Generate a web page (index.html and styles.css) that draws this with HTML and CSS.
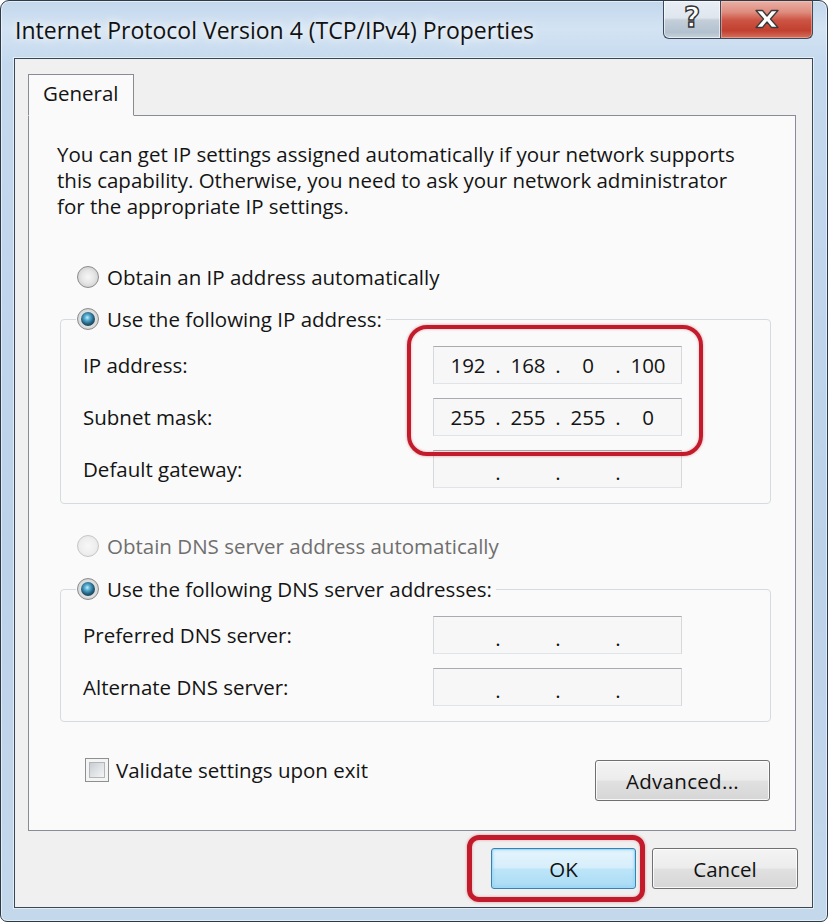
FILE: index.html
```html
<!DOCTYPE html>
<html lang="en">
<head>
<meta charset="utf-8">
<title>Internet Protocol Version 4 (TCP/IPv4) Properties</title>
<link rel="stylesheet" href="styles.css">
</head>
<body>
<div class="window">
  <div class="titlebar">
    <div class="title">Internet Protocol Version 4 (TCP/IPv4) Properties</div>
    <div class="caption-buttons">
      <div class="cap-btn help"><span class="help-glyph">?</span></div>
      <div class="cap-btn close">
        <svg class="close-glyph" width="26" height="20" viewBox="0 0 26 20"><polygon points="2,1.5 8.5,1.5 13,7 17.5,1.5 24,1.5 16.5,10 24,18.5 17.5,18.5 13,13 8.5,18.5 2,18.5 9.5,10" fill="#ffffff" stroke="#3b3b3b" stroke-width="1.3" stroke-linejoin="round"/></svg>
      </div>
    </div>
  </div>
  <div class="client">
    <div class="tabs"><div class="tab">General</div></div>
    <div class="panel">
      <p class="intro">You can get IP settings assigned automatically if your network supports<br>this capability. Otherwise, you need to ask your network administrator<br>for the appropriate IP settings.</p>

      <div class="option first-option"><span class="radio"></span><span>Obtain an IP address automatically</span></div>

      <fieldset class="group ip-group">
        <legend class="option"><span class="radio checked"></span><span>Use the following IP address:</span></legend>
        <div class="hl-wrap">
          <div class="row"><span class="label">IP address:</span>
            <div class="ipfield"><span class="seg">192</span><span class="dot">.</span><span class="seg">168</span><span class="dot">.</span><span class="seg">0</span><span class="dot">.</span><span class="seg">100</span></div>
          </div>
          <div class="row"><span class="label">Subnet mask:</span>
            <div class="ipfield"><span class="seg">255</span><span class="dot">.</span><span class="seg">255</span><span class="dot">.</span><span class="seg">255</span><span class="dot">.</span><span class="seg">0</span></div>
          </div>
          <div class="highlight hl-ip"></div>
        </div>
        <div class="row"><span class="label">Default gateway:</span>
          <div class="ipfield empty"><span class="seg"></span><span class="dot">.</span><span class="seg"></span><span class="dot">.</span><span class="seg"></span><span class="dot">.</span><span class="seg"></span></div>
        </div>
      </fieldset>

      <div class="option dns-auto disabled"><span class="radio disabled"></span><span>Obtain DNS server address automatically</span></div>

      <fieldset class="group dns-group">
        <legend class="option"><span class="radio checked"></span><span>Use the following DNS server addresses:</span></legend>
        <div class="row"><span class="label">Preferred DNS server:</span>
          <div class="ipfield empty"><span class="seg"></span><span class="dot">.</span><span class="seg"></span><span class="dot">.</span><span class="seg"></span><span class="dot">.</span><span class="seg"></span></div>
        </div>
        <div class="row"><span class="label">Alternate DNS server:</span>
          <div class="ipfield empty"><span class="seg"></span><span class="dot">.</span><span class="seg"></span><span class="dot">.</span><span class="seg"></span><span class="dot">.</span><span class="seg"></span></div>
        </div>
      </fieldset>

      <div class="bottom-row">
        <div class="check"><span class="checkbox"></span><span>Validate settings upon exit</span></div>
        <div class="btn advanced">Advanced...</div>
      </div>
    </div>
    <div class="footer">
      <div class="ok-wrap">
        <div class="btn ok">OK</div>
        <div class="highlight hl-ok"></div>
      </div>
      <div class="btn cancel">Cancel</div>
    </div>
  </div>
</div>
</body>
</html>
```

FILE: styles.css
```css
* { box-sizing: border-box; }
html, body { margin: 0; padding: 0; }
body {
  width: 828px;
  height: 922px;
  overflow: hidden;
  background: #ffffff;
  font-family: "Open Sans", "Noto Sans", sans-serif;
  font-size: 20.5px;
  color: #141414;
  white-space: nowrap;
}

.window {
  width: 828px;
  height: 922px;
  border: 1px solid #2d3a48;
  border-radius: 9px 9px 7px 7px;
  background: linear-gradient(180deg, #c3d7ec 0%, #d3e3f3 3%, #c4d9ee 7%, #bcd2e9 60%, #c4d8ec 100%);
  box-shadow: inset 0 0 0 1px rgba(255,255,255,0.55);
  display: flex;
  flex-direction: column;
}

.titlebar {
  height: 57px;
  flex: none;
  display: flex;
  justify-content: space-between;
  align-items: flex-start;
}
.title {
  margin: 14px 0 0 14px;
  font-size: 23px;
  line-height: 30px;
  color: #111;
  text-shadow: 0 0 8px rgba(255,255,255,0.95), 0 0 14px rgba(255,255,255,0.8);
}
.caption-buttons {
  display: flex;
  margin-right: 14px;
}
.cap-btn {
  height: 38px;
  display: flex;
  align-items: center;
  justify-content: center;
  border: 1px solid #3c4a5a;
  border-top: none;
}
.help {
  width: 57px;
  border-right: none;
  border-radius: 0 0 0 6px;
  background: linear-gradient(180deg, #e9eef4 0%, #dfe6ee 45%, #c3ced9 52%, #b3c1cf 85%, #c7d3de 100%);
  box-shadow: inset 0 0 0 1px rgba(255,255,255,0.6);
}
.help-glyph {
  font-family: "DejaVu Sans", sans-serif;
  font-weight: bold;
  font-size: 28px;
  line-height: 1;
  color: #ffffff;
  -webkit-text-stroke: 1.4px #333;
  margin-top: -3px;
}
.close {
  width: 93px;
  border-radius: 0 0 6px 0;
  background: linear-gradient(180deg, #e9b0a5 0%, #de8c7e 30%, #cc5444 52%, #c2402f 80%, #d4705f 100%);
  box-shadow: inset 0 0 0 1px rgba(255,210,200,0.45);
}
.close-glyph { margin-top: -1px; }

.client {
  flex: 1;
  margin: 0 14px 13px 13px;
  border: 1px solid #3a4856;
  background: #f0f0f0;
  box-shadow: 0 0 0 1px rgba(255,255,255,0.55);
  display: flex;
  flex-direction: column;
}

.tabs {
  padding: 15px 0 0 13px;
  display: flex;
}
.tab {
  position: relative;
  z-index: 1;
  width: 106px;
  height: 42px;
  margin-bottom: -1px;
  padding-left: 14px;
  border: 1px solid #898c95;
  border-bottom-color: #fafafa;
  background: #fafafa;
  line-height: 37px;
}

.panel {
  height: 716px;
  margin: 0 16px 0 13px;
  border: 1px solid #898c95;
  background: #fafafa;
  display: flex;
  flex-direction: column;
  align-items: flex-start;
}

.intro {
  margin: 25px 0 0 28px;
  line-height: 26px;
}

.option {
  display: flex;
  align-items: center;
  gap: 8px;
  height: 26px;
}
.first-option { margin: 45px 0 0 48px; }
.dns-auto { margin: 29px 0 0 48px; color: #6f6f6f; }

.radio {
  flex: none;
  position: relative;
  width: 22px;
  height: 22px;
  border-radius: 50%;
  border: 1px solid #8c8c8c;
  background: radial-gradient(circle at 50% 50%, #f6f6f6 0%, #e6e6e6 45%, #cfcfcf 80%, #c2c2c2 100%);
}
.radio.checked::after {
  content: "";
  position: absolute;
  inset: 3px;
  border-radius: 50%;
  background: radial-gradient(circle at 45% 40%, #c9ecfb 0%, #5cb3d6 22%, #24607f 55%, #123449 85%, #0d2636 100%);
}
.radio.disabled {
  border-color: #c6c6c6;
  background: radial-gradient(circle at 50% 50%, #f7f7f7 0%, #efefef 50%, #e2e2e2 100%);
}

.group {
  align-self: stretch;
  min-width: 0;
  margin: 16px 24px 0 31px;
  padding: 14px 0 15px 22px;
  border: 1px solid #d5dcdf;
  border-radius: 4px;
}
.dns-group { margin-top: 17px; }
.group legend {
  margin-left: -7px;
  padding: 0 4px 0 1px;
}

.hl-wrap { position: relative; }

.row {
  display: flex;
  align-items: center;
  height: 38px;
}
.row + .row, .hl-wrap + .row { margin-top: 14px; }
.label { width: 350px; flex: none; }

.ipfield {
  width: 249px;
  height: 38px;
  flex: none;
  display: flex;
  align-items: center;
  padding-left: 5px;
  border: 1px solid;
  border-color: #a9abb0 #d6d8dc #e0e3e7 #d6d8dc;
  background: #f7f7f7;
}
.seg { width: 58px; flex: none; text-align: center; }
.dot { width: 2px; flex: none; display: flex; justify-content: center; }
.empty .dot { padding-top: 6px; }

.highlight {
  position: absolute;
  border: 4px solid #c21c2c;
  box-shadow: 0 0 3px rgba(200, 30, 40, 0.45), inset 0 0 3px rgba(200, 30, 40, 0.35);
  pointer-events: none;
}
.hl-ip {
  left: 324px;
  top: -21px;
  width: 296px;
  height: 131px;
  border-radius: 20px;
}

.bottom-row {
  align-self: stretch;
  display: flex;
  justify-content: space-between;
  align-items: flex-start;
  margin: 36px 25px 0 56px;
}
.check {
  display: flex;
  align-items: center;
  gap: 7px;
  height: 24px;
}
.checkbox {
  flex: none;
  position: relative;
  width: 24px;
  height: 24px;
  border: 1px solid #8e8f8f;
  background: #f4f4f4;
}
.checkbox::after {
  content: "";
  position: absolute;
  inset: 3px;
  border: 1px solid #b2b6bb;
  background: linear-gradient(135deg, #c9cdd2 0%, #dfe2e5 50%, #f3f4f5 100%);
}

.btn {
  height: 41px;
  display: flex;
  align-items: center;
  justify-content: center;
  border: 1px solid #707070;
  border-radius: 3px;
  background: linear-gradient(180deg, #f4f4f4 0%, #ececec 48%, #e0e0e0 52%, #d6d6d6 100%);
  box-shadow: inset 0 0 0 1px rgba(255,255,255,0.8);
  color: #111;
}
.advanced { width: 175px; margin-top: 2px; letter-spacing: 0.3px; }

.footer {
  display: flex;
  justify-content: flex-end;
  gap: 16px;
  padding: 17px 14px 0 0;
}
.ok-wrap { position: relative; }
.ok {
  width: 145px;
  border-color: #3c7fb1;
  background: linear-gradient(180deg, #e6f5fc 0%, #d6eefb 48%, #bde5f9 52%, #a9dbf4 100%);
  box-shadow: inset 0 0 0 1px #9cdcf7, inset 0 0 3px 1px rgba(120,200,240,0.6);
}
.cancel { width: 146px; }
.hl-ok {
  left: -24px;
  top: -13px;
  width: 178px;
  height: 67px;
  border-width: 5px;
  border-radius: 12px;
}
```
